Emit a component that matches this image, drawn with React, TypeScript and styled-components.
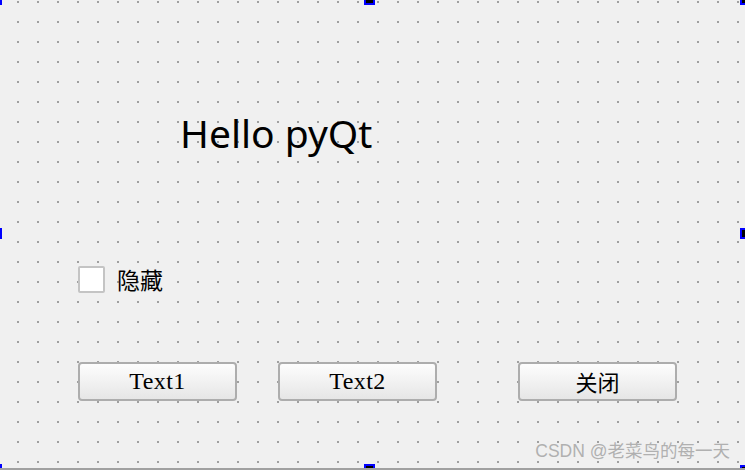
import React from 'react'
import styled, { createGlobalStyle } from 'styled-components'

const GlobalStyle = createGlobalStyle`
  html, body {
    margin: 0;
    padding: 0;
    background: #f0f0f0;
  }
`

const Form = styled.div`
  position: relative;
  width: 745px;
  height: 470px;
  box-sizing: border-box;
  overflow: hidden;
  border-bottom: 2px solid #a0a0a0;
  background-color: #f0f0f0;
  background-image: conic-gradient(from 270deg at 2px 2px, #a0a0a0 25%, transparent 0);
  background-size: 20px 20px;
  background-position: 17px 1px;
  display: flex;
  flex-direction: column;
  font-family: 'Noto Sans', 'Noto Sans CJK SC', sans-serif;
`

const Title = styled.div`
  margin: 114px 0 0 180px;
  font-size: 39px;
  line-height: 38px;
  color: #000;
`

const CheckRow = styled.label`
  margin: 114px 0 0 78px;
  height: 27px;
  display: flex;
  align-items: center;
  gap: 12px;
`

const Box = styled.span`
  width: 27px;
  height: 27px;
  box-sizing: border-box;
  border: 2px solid #c4c4c4;
  border-radius: 2px;
  background: #fff;
`

const CheckText = styled.span`
  font-family: 'Noto Sans CJK SC', sans-serif;
  font-size: 23px;
  line-height: 27px;
  color: #000;
`

const ButtonRow = styled.div`
  margin: 69px 0 0 78px;
  display: flex;
`

const Button = styled.button<{ $offset?: number; $cjk?: boolean }>`
  margin-left: ${(p) => p.$offset || 0}px;
  width: 159px;
  height: 39px;
  box-sizing: border-box;
  border: 2px solid #adadad;
  border-radius: 4px;
  background: linear-gradient(#fdfdfd, #e6e6e6);
  color: #000;
  padding: 0;
  font-family: ${(p) =>
    p.$cjk ? "'Noto Sans CJK SC', sans-serif" : "'Liberation Serif', serif"};
  font-size: ${(p) => (p.$cjk ? '22px' : '24px')};
  letter-spacing: ${(p) => (p.$cjk ? '0' : '0.4px')};
  line-height: 35px;
`

const Handle = styled.span<{ $x: number; $y: number }>`
  position: absolute;
  left: ${(p) => p.$x}px;
  top: ${(p) => p.$y}px;
  width: 11px;
  height: 11px;
  box-sizing: border-box;
  border: 2px solid #0000ff;
  background: #000;
`

const Watermark = styled.div`
  position: absolute;
  right: 15px;
  bottom: 7px;
  font-family: 'Liberation Sans', 'Noto Sans CJK SC', sans-serif;
  font-size: 17.5px;
  line-height: 20px;
  color: #b0b0b0;
`

const handles = [
  [-9, -6],
  [364, -6],
  [740, -6],
  [-9, 228],
  [740, 228],
  [-9, 464],
  [364, 464],
  [740, 465],
]

export default function App() {
  return (
    <>
      <GlobalStyle />
      <Form>
        <Title>Hello pyQt</Title>
        <CheckRow>
          <Box />
          <CheckText>隐藏</CheckText>
        </CheckRow>
        <ButtonRow>
          <Button>Text1</Button>
          <Button $offset={41}>Text2</Button>
          <Button $offset={81} $cjk>
            关闭
          </Button>
        </ButtonRow>
        <Watermark>CSDN @老菜鸟的每一天</Watermark>
        {handles.map(([x, y], i) => (
          <Handle key={i} $x={x} $y={y} />
        ))}
      </Form>
    </>
  )
}
